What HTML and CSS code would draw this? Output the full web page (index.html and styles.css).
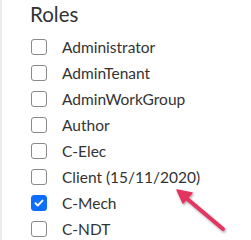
FILE: index.html
```html
<!DOCTYPE html>
<html>
<head>
<meta charset="utf-8">
<link rel="stylesheet" href="styles.css">
</head>
<body>
<div class="panel">
  <h5 class="title">Roles</h5>
  <ul class="roles">
    <li class="role"><span class="box"></span><span class="label">Administrator</span></li>
    <li class="role"><span class="box"></span><span class="label">AdminTenant</span></li>
    <li class="role"><span class="box"></span><span class="label">AdminWorkGroup</span></li>
    <li class="role"><span class="box"></span><span class="label">Author</span></li>
    <li class="role"><span class="box"></span><span class="label">C-Elec</span></li>
    <li class="role"><span class="box"></span><span class="label">Client (15/11/2020)</span></li>
    <li class="role"><span class="box checked"><svg viewBox="0 0 16 16" width="16" height="16"><path d="M4 8.3l2.6 2.6L12 5.3" fill="none" stroke="#fff" stroke-width="2.2" stroke-linecap="round" stroke-linejoin="round"/></svg></span><span class="label">C-Mech</span></li>
    <li class="role"><span class="box"></span><span class="label">C-NDT</span></li>
  </ul>
  <svg class="arrow" width="251" height="240" viewBox="0 0 251 240">
    <defs>
      <filter id="sh" x="-20%" y="-20%" width="140%" height="140%">
        <feDropShadow dx="1" dy="1.5" stdDeviation="1.2" flood-color="#000" flood-opacity="0.35"/>
      </filter>
    </defs>
    <g filter="url(#sh)" fill="#e2345f" stroke="#e2345f">
      <line x1="221" y1="229" x2="183" y2="197" stroke-width="4" stroke-linecap="round"/>
      <polygon points="175,190 190,193 181,203" stroke-width="1.5" stroke-linejoin="round"/>
    </g>
  </svg>
</div>
</body>
</html>
```
FILE: styles.css
```css
html, body {
  margin: 0;
  padding: 0;
  background: #fff;
}
.panel {
  position: relative;
  width: 251px;
  height: 240px;
  box-sizing: border-box;
  border-left: 2px solid #ececec;
  padding-left: 29px;
  font-family: Lato, "Open Sans", sans-serif;
  color: #212529;
  overflow: hidden;
}
.title {
  margin: 0 0 0 -1px;
  padding-top: 1px;
  font-size: 20.5px;
  font-weight: 400;
  line-height: 26px;
  color: #333;
}
.roles {
  list-style: none;
  margin: 7px 0 0 0;
  padding: 0;
  display: flex;
  flex-direction: column;
}
.role {
  display: flex;
  align-items: center;
  height: 26px;
}
.box {
  width: 16px;
  height: 16px;
  box-sizing: border-box;
  border: 1px solid #8a8a8a;
  border-radius: 3px;
  flex: none;
  display: flex;
  align-items: center;
  justify-content: center;
}
.box.checked {
  background: #0d6efd;
  border-color: #0d6efd;
}
.box svg {
  display: block;
}
.label {
  margin-left: 15px;
  font-size: 15.5px;
  line-height: 20px;
  color: #333;
}
.arrow {
  position: absolute;
  left: 0;
  top: 0;
  pointer-events: none;
}
```
